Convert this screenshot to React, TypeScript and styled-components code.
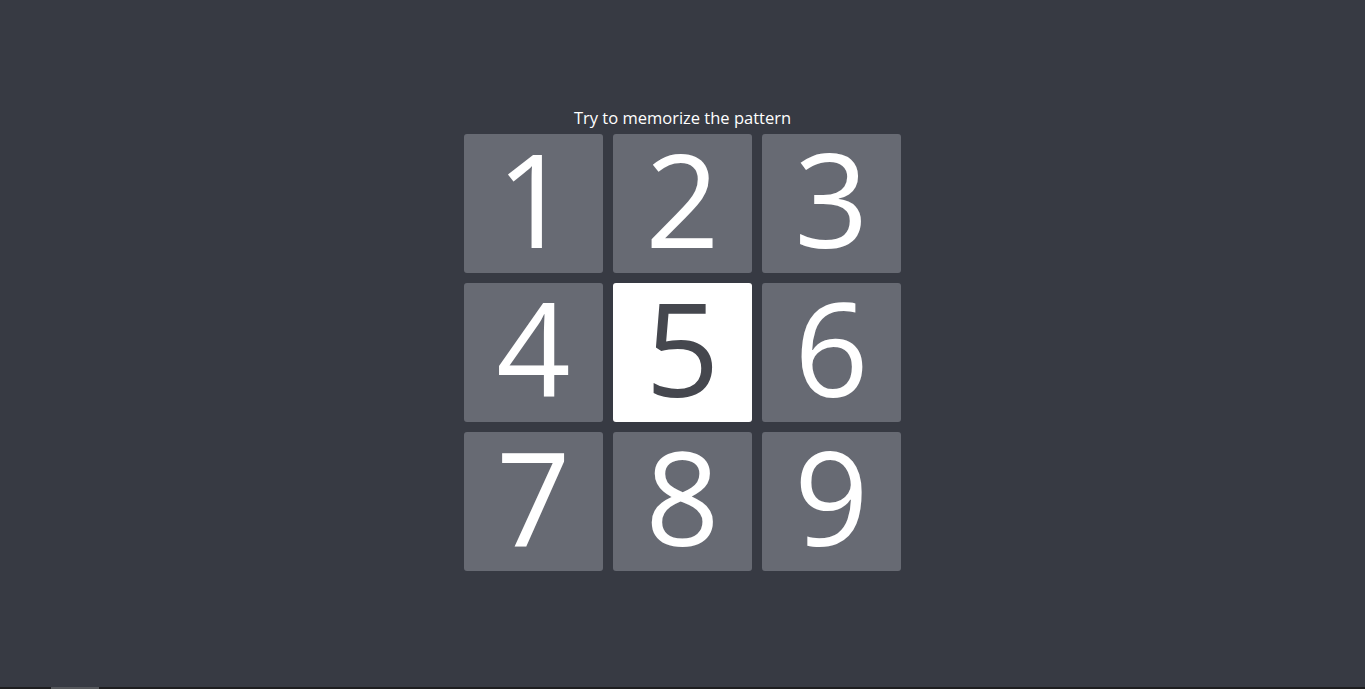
import React from "react";
import styled, { createGlobalStyle } from "styled-components";

const Global = createGlobalStyle`
  html, body { margin: 0; padding: 0; height: 100%; background: #373a43; }
  #root { height: 100%; }
`;

const Page = styled.div`
  height: 100vh;
  display: flex;
  flex-direction: column;
  background: #373a43;
  font-family: "Open Sans", "Noto Sans", sans-serif;
  overflow: hidden;
`;

const Stage = styled.main`
  flex: 1;
  display: flex;
  flex-direction: column;
  align-items: center;
  padding-top: 106px;
`;

const Title = styled.h1`
  margin: 0 0 5px;
  font-size: 16.5px;
  font-weight: 400;
  line-height: 23px;
  color: #ffffff;
`;

const Board = styled.div`
  display: grid;
  grid-template-columns: repeat(3, 139px);
  grid-auto-rows: 139px;
  gap: 10px;
`;

const Tile = styled.div<{ $active?: boolean }>`
  display: flex;
  align-items: center;
  justify-content: center;
  border-radius: 3px;
  background: ${(p) => (p.$active ? "#ffffff" : "#676a73")};
  color: ${(p) => (p.$active ? "#45474e" : "#ffffff")};
  font-size: 130px;
  font-weight: 500;
  line-height: 0.8;
  user-select: none;
`;

const Digit = styled.span`
  display: block;
  transform: translateY(-6px);
`;

const ScrollTrack = styled.div`
  height: 2px;
  background: #1d1d1f;
  display: flex;
  padding-left: 51px;
`;

const ScrollThumb = styled.div`
  width: 48px;
  background: #56585c;
`;

export default function App() {
  const nums = [1, 2, 3, 4, 5, 6, 7, 8, 9];
  return (
    <Page>
      <Global />
      <Stage>
        <Title>Try to memorize the pattern</Title>
        <Board>
          {nums.map((n) => (
            <Tile key={n} $active={n === 5}>
              <Digit>{n}</Digit>
            </Tile>
          ))}
        </Board>
      </Stage>
      <ScrollTrack>
        <ScrollThumb />
      </ScrollTrack>
    </Page>
  );
}
